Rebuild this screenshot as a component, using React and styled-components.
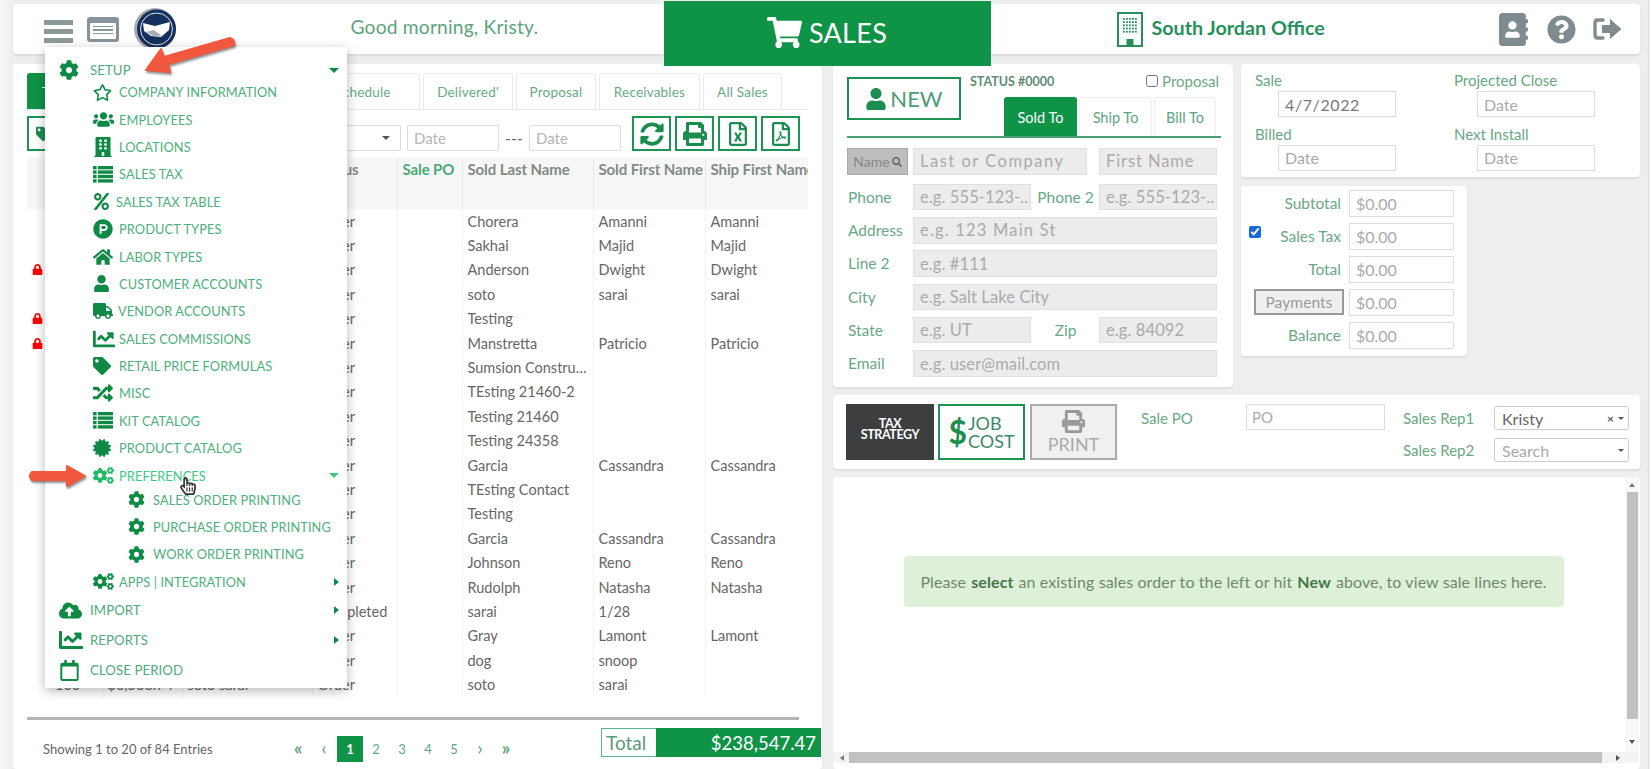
import React from 'react';
import styled, { createGlobalStyle } from 'styled-components';
import {
  FaCog, FaRegStar, FaUsers, FaBuilding, FaPercent, FaProductHunt, FaHome, FaUser, FaTruck,
  FaChartLine, FaTag, FaRandom, FaCertificate, FaCogs, FaCloudUploadAlt, FaRegCalendar, FaShoppingCart,
  FaAddressBook, FaQuestionCircle, FaSyncAlt, FaPrint, FaRegFileExcel, FaRegFilePdf, FaSearch, FaLock,
  FaRegHandPointer, FaTags,
} from 'react-icons/fa';

const GREEN = '#0f9347';
const FONT = '"Lato", "Open Sans", sans-serif';

const Global = createGlobalStyle`
  html, body { margin: 0; padding: 0; height: 100%; overflow: hidden; background: #eceef0; }
  * { box-sizing: border-box; }
  body { font-family: ${FONT}; color: #666; }
  input { font-family: ${FONT}; }
`;

const Page = styled.div`
  position: relative; width: 1651px; height: 769px; overflow: hidden;
  padding: 4px 11px 0 13px;
  background: linear-gradient(90deg, #f9f9fb 0, #eceef0 12px, #eceef0 1648px, #d9dadd 1649px, #fbfbfb 1650px);
`;

const Header = styled.header`
  display: flex; align-items: center; height: 50px; background: #fff; border-radius: 4px;
  box-shadow: 0 2px 2px rgba(0,0,0,.08); padding-left: 31px;
`;
const Burger = styled.div`
  display: flex; flex-direction: column; justify-content: space-between; width: 29px; height: 23px; margin-top: 5px;
  span { display: block; height: 5px; background: #8b9a99; }
`;
const ListCard = styled.div`
  width: 32px; height: 25px; margin-left: 14px; border-radius: 3px; background: #87959a; padding: 6px 3px 3px;
  display: flex;
  div { flex: 1; background: #fff; border-radius: 1px; padding: 3px 3px; display: flex; flex-direction: column; gap: 2px; }
  i { display: block; height: 1.5px; background: #87959a; }
`;
const LogoWrap = styled.div`width: 44px; height: 44px; margin-left: 15px;`;
const Greeting = styled.div`
  width: 313px; margin-left: 172.5px; margin-bottom: 5px; font-size: 19.2px; color: #5da37c; letter-spacing: .2px;
`;
const SalesTab = styled.div`
  width: 327px; height: 65px; align-self: flex-start; margin-top: -3px; padding-bottom: 3px;
  background: ${GREEN}; color: #fff; display: flex; align-items: center; justify-content: center;
  gap: 7px; font-size: 27px; letter-spacing: .3px; position: relative; z-index: 2;
  svg { font-size: 35px; }
`;
const Office = styled.div`
  display: flex; align-items: center; gap: 9px; margin-left: 126px; font-size: 19.7px; font-weight: 700;
  color: #27905a; width: 380px;
  span { padding-bottom: 4px; }
`;
const HeadIcons = styled.div`
  display: flex; align-items: center; gap: 17px; color: #7e8b8f;
`;

const Main = styled.main`
  display: grid; grid-template-columns: 809px 807px; column-gap: 11px; margin-top: 10px; height: 705px;
`;
const LeftPanel = styled.section`
  background: #fff; border-radius: 4px; padding: 9px 14px 0; display: flex; flex-direction: column; min-width: 0;
`;
const Tabs = styled.div`
  display: flex; gap: 3px; height: 37px; border-bottom: 1px solid #e8e8e8; align-items: stretch; flex: none;
`;
const TabItem = styled.div`
  width: ${p => p.$w}px; display: flex; align-items: center; justify-content: center;
  font-size: 13.5px; border: 1px solid ${p => (p.$active ? GREEN : '#ececec')}; border-bottom: 0;
  border-radius: 3px 3px 0 0; color: ${p => (p.$active ? '#fff' : '#66ab84')};
  background: ${p => (p.$active ? GREEN : '#fff')}; letter-spacing: .2px;
`;
const FilterRow = styled.div`
  display: flex; align-items: flex-end; height: 41px; flex: none;
`;
const OutlineBtn = styled.div`
  width: ${p => p.$w || 39}px; height: 35px; border: 2px solid #1b9553; color: #1b8d4e;
  display: flex; align-items: center; justify-content: center; font-size: 24px; flex: none;
`;
const BtnGroup = styled.div`display: flex; gap: 4px; margin-left: 11px;`;
const SmallSelect = styled.div`
  width: 150px; height: 26px; margin-left: 188px; border: 1px solid #ddd; border-radius: 2px;
  display: flex; align-items: center; justify-content: flex-end; padding-right: 10px;
`;
const CaretDown = styled.i`
  display: inline-block; border-left: ${p => p.$s || 4}px solid transparent; border-right: ${p => p.$s || 4}px solid transparent;
  border-top: ${p => p.$s || 4}px solid ${p => p.$c || '#555'};
`;
const DateInput = styled.input`
  width: 92px; height: 26px; border: 1px solid #ddd; font-size: 15px; padding: 0 6px; border-radius: 1px;
  color: #777; background: #fff;
  &::placeholder { color: #b5b5b5; opacity: 1; }
`;
const Dash = styled.span`width: 30px; text-align: center; font-size: 16px; color: #666; padding-bottom: 4px;`;
const DateGap = styled.span`width: 6px;`;

const TableWrap = styled.div`
  width: 781px; overflow: hidden; margin-top: 7px; flex: none; height: 539px;
`;
const Table = styled.table`
  table-layout: fixed; width: 797px; border-collapse: collapse; font-size: 14.5px;
`;
const Th = styled.th`
  height: 51px; background: #f7f7f7; text-align: left; vertical-align: top; padding: 2px 5px; font-size: 15px;
  font-weight: 700; color: ${p => (p.$g ? '#4caa75' : '#7f8c84')}; border-right: 1px solid #e9e9e9; white-space: nowrap; overflow: hidden;
  letter-spacing: -.1px;
`;
const Td = styled.td`
  height: 24.4px; padding: 0 5px; color: #666; white-space: nowrap; overflow: hidden; text-overflow: ellipsis;
  border-right: 1px solid #f3f3f3;
`;
const LockSlot = styled.span`
  display: inline-block; width: 23px; color: #f00; font-size: 11px;
`;
const TableRule = styled.div`flex: none; height: 3px; background: #b5b5b5; width: 772px; margin-top: 20px;`;
const FootRow = styled.div`
  display: flex; align-items: flex-start; height: 48px; width: 795px; flex: none;
`;
const Showing = styled.div`font-size: 13px; color: #666; padding-left: 16px; width: 258px; margin-top: 21px;`;
const Pager = styled.div`
  display: flex; align-items: center; font-size: 13px; color: #5ea67e; width: 316px; margin-top: 16px;
`;
const PageNum = styled.span`
  width: 26px; height: 26px; display: flex; align-items: center; justify-content: center;
  background: ${p => (p.$on ? GREEN : 'transparent')}; color: ${p => (p.$on ? '#fff' : '#5ea67e')}; font-weight: ${p => (p.$b ? 700 : 400)};
  font-size: ${p => (p.$arrow ? 19 : 13)}px; padding-bottom: ${p => (p.$arrow ? 3 : 0)}px;
`;
const TotalBox = styled.div`
  display: flex; width: 220px; height: 29px; margin-top: 8px; flex: none;
`;
const TotalLabel = styled.div`
  width: 55px; border: 1px solid #5fb287; border-right: 0; color: #5d9a7a; font-size: 19px; display: flex; align-items: center; padding-left: 4px;
`;
const TotalValue = styled.div`
  flex: 1; background: ${GREEN}; color: #fff; font-size: 18.5px; display: flex; align-items: center; justify-content: flex-end; padding-right: 5px;
`;

const RightCol = styled.section`
  display: grid; grid-template-columns: 400px 399px; column-gap: 8px; grid-template-rows: 323px 74px 1fr; row-gap: 8px; min-width: 0;
`;
const Card = styled.div`background: #fff; border-radius: 4px; box-shadow: 0 2px 2px rgba(0,0,0,.07);`;
const FormCard = styled(Card)`padding: 13px 14px 0;`;
const FormTop = styled.div`display: flex; align-items: flex-start;`;
const NewBtn = styled.div`
  width: 114px; height: 43px; border: 2px solid #1b9553; color: #4b9c72; font-size: 22px; display: flex; align-items: center; justify-content: center; gap: 3px;
  svg { color: #1b8d4e; font-size: 22px; }
`;
const StatusCol = styled.div`flex: 1; padding-left: 9px;`;
const StatusLine = styled.div`display: flex; justify-content: space-between; align-items: center; height: 12px; margin-top: -2px;`;
const StatusText = styled.span`font-size: 12.5px; font-weight: 700; color: #5f8c72;`;
const ProposalCheck = styled.label`
  display: flex; align-items: center; gap: 4px; font-size: 15px; color: #6aa983;
  input { margin: 0; width: 12px; height: 12px; }
`;
const FormTabs = styled.div`display: flex; gap: 2px; margin-top: 10px; padding-left: 34px;`;
const FormTab = styled.div`
  width: ${p => p.$w}px; height: 39px; display: flex; align-items: center; justify-content: center; font-size: 14.5px;
  border: 1px solid ${p => (p.$on ? GREEN : '#eee')}; border-bottom: 0; border-radius: 3px 3px 0 0;
  background: ${p => (p.$on ? GREEN : '#fff')}; color: ${p => (p.$on ? '#fff' : '#5ea67e')};
`;
const FormRule = styled.div`height: 2px; background: #4d9e73; margin: 0 -2px 0 0;`;
const FormGrid = styled.div`
  display: grid; grid-template-columns: 66px 118px 68px 118px; margin-top: 10px; row-gap: 6.8px; align-items: start;
`;
const FieldLabel = styled.label`
  font-size: 15.5px; color: #68a883; padding-left: 1px; line-height: 26.5px;
  ${p => p.$center && 'text-align: center;'}
`;
const FieldInput = styled.input`
  height: 26.5px; width: ${p => p.$width || '100%'}; border: 1px solid #e0e0e0; background: #ececec; font-size: 16.5px; padding: 0 2px 0 6px; min-width: 0;
  grid-column: ${p => p.$span || 'auto'}; letter-spacing: ${p => p.$track || 0.1}px;
  &::placeholder { color: #aaa; opacity: 1; }
`;
const NameBtn = styled.div`
  height: 27px; width: 61px; margin-bottom: 2px; background: #bdbdbd; border: 1px solid #aaa; color: #888; font-size: 14px; display: flex; align-items: center; justify-content: center; gap: 2px;
  svg { font-size: 10px; color: #666; }
`;
const SideStack = styled.div`display: flex; flex-direction: column; gap: 9px;`;
const DatesCard = styled(Card)`
  height: 113px; display: grid; grid-template-columns: 199px 1fr; padding: 6px 14px 0;
`;
const DateBlock = styled.div`
  display: flex; flex-direction: column; height: 53px;
  span { font-size: 15px; color: #68a883; line-height: 21px; }
`;
const DateField = styled.input`
  width: 118px; height: 26px; margin-left: 23px; border: 1px solid #ddd; font-size: 16px; padding: 0 6px; background: #fff; color: #777; letter-spacing: .6px;
  &::placeholder { color: #aaa; opacity: 1; letter-spacing: 0; }
`;
const TotalsCard = styled(Card)`
  width: 226px; height: 170px; padding-top: 4px; display: flex; flex-direction: column; gap: 6.5px; padding-left: 8px;
`;
const TotalRow = styled.div`display: flex; align-items: center; height: 26.5px;`;
const TotalLeft = styled.div`
  width: 92px; display: flex; align-items: center; justify-content: flex-end; font-size: 15.5px; color: #68a883;
  input { margin: 0 auto 8px 0; width: 12px; height: 12px; accent-color: #1668dc; }
`;
const TotalInput = styled.input`
  margin-left: 8px; width: 105px; height: 26.5px; border: 1px solid #ddd; font-size: 16px; padding: 0 6px;
  &::placeholder { color: #aaa; opacity: 1; }
`;
const PayBtn = styled.div`
  width: 90px; height: 26px; flex: none; margin-right: -3px; border: 2px solid #999; background: #efefef; color: #999; font-size: 15.5px; letter-spacing: .1px; display: flex; align-items: center; justify-content: center;
`;
const Toolbar = styled(Card)`
  grid-column: 1 / 3; display: flex; padding: 9px 0 0 13px;
`;
const TaxBtn = styled.div`
  width: 88px; height: 56px; padding-bottom: 7px; background: #3c3e40; color: #fff; font-size: 12.5px; font-weight: 700; line-height: 11px; text-align: center; display: flex; align-items: center; justify-content: center; letter-spacing: -.4px;
`;
const JobBtn = styled.div`
  width: 87px; height: 56px; margin-left: 4px; border: 2px solid #1b9553; color: #3d8c66; display: flex; align-items: center; justify-content: center; font-size: 18px; line-height: 18px;
  b { font-size: 32px; line-height: 1; font-weight: 700; color: #1b8d4e; margin-right: 1px; }
`;
const PrintBtn = styled.div`
  width: 87px; height: 56px; margin-left: 5px; border: 2px solid #aaa; background: #f0f0f0; color: #aaa; display: flex; flex-direction: column; align-items: center; justify-content: center; font-size: 18px; line-height: 22px;
  svg { font-size: 23px; color: #9a9a9a; }
`;
const SaleLabel = styled.span`margin-left: 24px; width: 105px; font-size: 15px; color: #68a883; padding-top: 5px;`;
const PoInput = styled.input`
  width: 139px; height: 26px; border: 1px solid #ddd; font-size: 15px; padding: 0 5px;
  &::placeholder { color: #aaa; opacity: 1; }
`;
const RepCol = styled.div`display: flex; flex-direction: column; margin-left: 18px; gap: 8px; margin-top: 2px;`;
const RepRow = styled.div`display: flex; align-items: center;`;
const RepLabel = styled.span`width: 91px; font-size: 15px; color: #68a883;`;
const RepSelect = styled.div`
  width: 135px; height: 24px; border: 1px solid #ccc; border-radius: 3px; display: flex; align-items: center; padding: 0 4px 0 7px; gap: 4px;
  font-size: 16px; color: ${p => (p.$ph ? '#aaa' : '#666')};
  span:first-child { flex: 1; }
`;
const Clear = styled.span`font-size: 12px; font-weight: 700; color: #555;`;
const Lines = styled.div`
  grid-column: 1 / 3; display: grid; grid-template-columns: 792px 14px; grid-template-rows: 275px 11px 5px; min-height: 0; background: #fff; border-radius: 4px;
`;
const LinesBody = styled.div`
  display: flex; align-items: flex-start; justify-content: center; padding: 79px 0 0 9px;
`;
const Alert = styled.div`
  width: 660px; height: 51px; background: #dff0d8; border-radius: 4px; display: flex; align-items: center; justify-content: center;
  font-size: 16px; color: #6e8a6e; gap: 5px; letter-spacing: .1px;
  b { color: #47764a; }
`;
const VScroll = styled.div`
  position: relative; background: #f8f8f8; padding: 15px 1px 0 2px;
`;
const VThumb = styled.div`height: 227px; background: #c1c1c1;`;
const HScroll = styled.div`
  position: relative; grid-column: 1 / 3; background: #f3f3f3; padding: 0 37px 0 16px;
`;
const HThumb = styled.div`height: 100%; background: #c1c1c1;`;
const ScrollCaret = styled.i`
  position: absolute;
  ${p => p.$dir === 'up' && 'left: 4px; top: 6px; border-left: 3px solid transparent; border-right: 3px solid transparent; border-bottom: 4px solid #777;'}
  ${p => p.$dir === 'down' && 'left: 4px; bottom: 8px; border-left: 3px solid transparent; border-right: 3px solid transparent; border-top: 4px solid #555;'}
  ${p => p.$dir === 'left' && 'left: 7px; top: 3px; border-top: 3px solid transparent; border-bottom: 3px solid transparent; border-right: 4px solid #777;'}
  ${p => p.$dir === 'right' && 'right: 19px; top: 3px; border-top: 3px solid transparent; border-bottom: 3px solid transparent; border-left: 4px solid #555;'}
`;

const Menu = styled.nav`
  position: absolute; left: 45px; top: 47px; width: 302px; height: 641px; background: #fff; z-index: 5;
  box-shadow: 0 3px 12px rgba(0,0,0,.28); padding-top: 14.5px; border-radius: 2px;
`;
const MenuRow = styled.div`
  display: flex; align-items: center; height: ${p => p.$h || 27.4}px; padding-left: ${p => [14, 48, 83][p.$level]}px; padding-right: 8px;
  font-size: ${p => (p.$level === 0 ? 13.2 : 12.8)}px; letter-spacing: .1px; white-space: nowrap;
  margin-top: ${p => (p.$tuck ? -3.5 : 0)}px;
  color: ${p => (p.$bright ? '#3ec97f' : p.$level === 0 ? '#50a97b' : '#4cb07a')};
`;
const MenuIcon = styled.span`
  flex: none; width: ${p => p.$w}px; display: flex; align-items: center; color: ${p => (p.$bright ? '#22b968' : '#0f8a44')};
`;
const MenuCaret = styled.i`
  margin-left: auto;
  ${p => (p.$right
    ? 'border-top: 4px solid transparent; border-bottom: 4px solid transparent; border-left: 5px solid #0f8a44;'
    : `border-left: 5px solid transparent; border-right: 5px solid transparent; border-top: 5px solid ${p.$bright ? '#3ec97f' : '#0f8a44'};`)}
`;
const Hand = styled.span`
  position: absolute; left: 179px; top: 477px; z-index: 7; color: #333; font-size: 18px; line-height: 0;
`;
const ArrowLayer = styled.svg`
  position: absolute; left: 0; top: 0; width: 300px; height: 520px; z-index: 6; pointer-events: none;
  filter: drop-shadow(1px 2px 1px rgba(0,0,0,.45));
`;

function BuildingIcon() {
  const dots = [];
  for (let y = 0; y < 5; y++) for (let x = 0; x < 5; x++) dots.push(<rect key={x + '-' + y} x={6 + x * 3} y={6 + y * 3.2} width="1.8" height="1.8" fill="#27905a" />);
  return (
    <svg width="26" height="35" viewBox="0 0 26 35">
      <rect x="1" y="1" width="24" height="33" fill="none" stroke="#27905a" strokeWidth="2" />
      {dots}
      <rect x="9.5" y="27" width="7" height="7" fill="#27905a" />
    </svg>
  );
}
function Logo() {
  return (
    <svg width="44" height="44" viewBox="0 0 44 44">
      <circle cx="21" cy="22" r="21" fill="#a5abb0" />
      <circle cx="22.5" cy="22" r="19.5" fill="#14305c" />
      <circle cx="22.5" cy="22" r="16" fill="none" stroke="#dfe4ea" strokeWidth="1" />
      <path d="M9 16 L21 19 L36 15 L35 23 L27 30 L17 29 L10 24 Z" fill="#fff" />
      <path d="M12 25 L20 23 L28 29 L20 29.5 Z" fill="#a7b0ba" />
    </svg>
  );
}
function SignOut() {
  return (
    <svg width="29" height="24" viewBox="0 0 29 24">
      <path d="M10 3H5C3 3 2 4 2 6V18C2 20 3 21 5 21H10" fill="none" stroke="#7e8b8f" strokeWidth="3.4" strokeLinecap="round" />
      <path d="M9 8H17V2L28.5 12L17 22V16H9Z" fill="#7e8b8f" />
    </svg>
  );
}
function DenseList({ size }) {
  return (
    <svg width={size} height={size * 0.84} viewBox="0 0 19 16" fill="currentColor">
      {[0, 4.2, 8.4, 12.6].map(y => (
        <g key={y}>
          <rect x="0" y={y} width="3.4" height="3.2" />
          <rect x="4.6" y={y} width="14.4" height="3.2" />
        </g>
      ))}
    </svg>
  );
}

const MENU = [
  { l: 'SETUP', I: FaCog, level: 0, s: 20, w: 31, h: 17, caret: 'down' },
  { l: 'COMPANY INFORMATION', I: FaRegStar, level: 1, s: 19, w: 26 },
  { l: 'EMPLOYEES', I: FaUsers, level: 1, s: 21, w: 26 },
  { l: 'LOCATIONS', I: FaBuilding, level: 1, s: 20, w: 26 },
  { l: 'SALES TAX', I: DenseList, level: 1, s: 20, w: 26 },
  { l: 'SALES TAX TABLE', I: FaPercent, level: 1, s: 17, w: 23 },
  { l: 'PRODUCT TYPES', I: FaProductHunt, level: 1, s: 20, w: 26 },
  { l: 'LABOR TYPES', I: FaHome, level: 1, s: 20, w: 26 },
  { l: 'CUSTOMER ACCOUNTS', I: FaUser, level: 1, s: 17, w: 26 },
  { l: 'VENDOR ACCOUNTS', I: FaTruck, level: 1, s: 20, w: 25 },
  { l: 'SALES COMMISSIONS', I: FaChartLine, level: 1, s: 22, w: 26 },
  { l: 'RETAIL PRICE FORMULAS', I: FaTag, level: 1, s: 18, w: 26 },
  { l: 'MISC', I: FaRandom, level: 1, s: 20, w: 26 },
  { l: 'KIT CATALOG', I: DenseList, level: 1, s: 20, w: 26 },
  { l: 'PRODUCT CATALOG', I: FaCertificate, level: 1, s: 18, w: 26 },
  { l: 'PREFERENCES', I: FaCogs, level: 1, s: 21, w: 26, caret: 'down', bright: true },
  { l: 'SALES ORDER PRINTING', I: FaCog, level: 2, s: 17, w: 25, tuck: true },
  { l: 'PURCHASE ORDER PRINTING', I: FaCog, level: 2, s: 17, w: 25 },
  { l: 'WORK ORDER PRINTING', I: FaCog, level: 2, s: 17, w: 25 },
  { l: 'APPS | INTEGRATION', I: FaCogs, level: 1, s: 21, w: 26, caret: 'right' },
  { l: 'IMPORT', I: FaCloudUploadAlt, level: 0, s: 23, w: 31, h: 30, caret: 'right' },
  { l: 'REPORTS', I: FaChartLine, level: 0, s: 24, w: 31, h: 30, caret: 'right' },
  { l: 'CLOSE PERIOD', I: FaRegCalendar, level: 0, s: 21, w: 31, h: 30 },
];

const ROWS = [
  ['Order', 'Chorera', 'Amanni', 'Amanni'],
  ['Order', 'Sakhai', 'Majid', 'Majid'],
  ['Order', 'Anderson', 'Dwight', 'Dwight', 1],
  ['Order', 'soto', 'sarai', 'sarai'],
  ['Order', 'Testing', '', '', 1],
  ['Order', 'Manstretta', 'Patricio', 'Patricio', 1],
  ['Order', 'Sumsion Construction', '', ''],
  ['Order', 'TEsting 21460-2', '', ''],
  ['Order', 'Testing 21460', '', ''],
  ['Order', 'Testing 24358', '', ''],
  ['Order', 'Garcia', 'Cassandra', 'Cassandra'],
  ['Order', 'TEsting Contact', '', ''],
  ['Order', 'Testing', '', ''],
  ['Order', 'Garcia', 'Cassandra', 'Cassandra'],
  ['Order', 'Johnson', 'Reno', 'Reno'],
  ['Order', 'Rudolph', 'Natasha', 'Natasha'],
  ['Completed', 'sarai', '1/28', ''],
  ['Order', 'Gray', 'Lamont', 'Lamont'],
  ['Order', 'dog', 'snoop', ''],
  ['Order', 'soto', 'sarai', ''],
];

const COLS = [75, 80, 130, 85, 65, 131, 112, 119];

export default function App() {
  return (
    <Page>
      <Global />
      <Header>
        <Burger><span /><span /><span /></Burger>
        <ListCard><div><i /><i /><i /></div></ListCard>
        <LogoWrap><Logo /></LogoWrap>
        <Greeting>Good morning, Kristy.</Greeting>
        <SalesTab><FaShoppingCart />SALES</SalesTab>
        <Office><BuildingIcon /><span>South Jordan Office</span></Office>
        <HeadIcons>
          <FaAddressBook size={33} />
          <FaQuestionCircle size={29} />
          <SignOut />
        </HeadIcons>
      </Header>
      <Main>
        <LeftPanel>
          <Tabs>
            <TabItem $active $w={66}>Today</TabItem>
            <TabItem $w={94} />
            <TabItem $w={110} />
            <TabItem $w={114}>Schedule</TabItem>
            <TabItem $w={90}>Delivered'</TabItem>
            <TabItem $w={80}>Proposal</TabItem>
            <TabItem $w={101}>Receivables</TabItem>
            <TabItem $w={79}>All Sales</TabItem>
          </Tabs>
          <FilterRow>
            <OutlineBtn $w={36}><FaTags size={18} /></OutlineBtn>
            <SmallSelect><CaretDown /></SmallSelect>
            <DateGap />
            <DateInput placeholder="Date" readOnly />
            <Dash>---</Dash>
            <DateInput placeholder="Date" readOnly />
            <BtnGroup>
              <OutlineBtn><FaSyncAlt /></OutlineBtn>
              <OutlineBtn><FaPrint /></OutlineBtn>
              <OutlineBtn><FaRegFileExcel /></OutlineBtn>
              <OutlineBtn><FaRegFilePdf /></OutlineBtn>
            </BtnGroup>
          </FilterRow>
          <TableWrap>
            <Table>
              <colgroup>{COLS.map((c, i) => <col key={i} width={c} />)}</colgroup>
              <thead>
                <tr>
                  <Th />
                  <Th />
                  <Th />
                  <Th>Status</Th>
                  <Th $g>Sale PO</Th>
                  <Th>Sold Last Name</Th>
                  <Th>Sold First Name</Th>
                  <Th>Ship First Name</Th>
                </tr>
              </thead>
              <tbody>
                {ROWS.map((r, i) => (
                  <tr key={i}>
                    <Td>{r[4] ? <LockSlot><FaLock /></LockSlot> : null}{i === 19 ? <LockSlot /> : null}{i === 19 ? '100' : ''}</Td>
                    <Td>{i === 19 ? '$6,538.74' : ''}</Td>
                    <Td>{i === 19 ? 'soto sarai' : ''}</Td>
                    <Td>{r[0]}</Td>
                    <Td />
                    <Td>{r[1]}</Td>
                    <Td>{r[2]}</Td>
                    <Td>{r[3]}</Td>
                  </tr>
                ))}
              </tbody>
            </Table>
          </TableWrap>
          <TableRule />
          <FootRow>
            <Showing>Showing 1 to 20 of 84 Entries</Showing>
            <Pager>
              <PageNum $b $arrow>«</PageNum>
              <PageNum $arrow>‹</PageNum>
              <PageNum $on $b>1</PageNum>
              <PageNum>2</PageNum>
              <PageNum>3</PageNum>
              <PageNum>4</PageNum>
              <PageNum>5</PageNum>
              <PageNum $arrow>›</PageNum>
              <PageNum $b $arrow>»</PageNum>
            </Pager>
            <TotalBox>
              <TotalLabel>Total</TotalLabel>
              <TotalValue>$238,547.47</TotalValue>
            </TotalBox>
          </FootRow>
        </LeftPanel>
        <RightCol>
          <FormCard>
            <FormTop>
              <NewBtn><FaUser />NEW</NewBtn>
              <StatusCol>
                <StatusLine>
                  <StatusText>STATUS #0000</StatusText>
                  <ProposalCheck><input type="checkbox" readOnly />Proposal</ProposalCheck>
                </StatusLine>
                <FormTabs>
                  <FormTab $on $w={73}>Sold To</FormTab>
                  <FormTab $w={73}>Ship To</FormTab>
                  <FormTab $w={62}>Bill To</FormTab>
                </FormTabs>
              </StatusCol>
            </FormTop>
            <FormRule />
            <FormGrid>
              <NameBtn>Name<FaSearch /></NameBtn>
              <FieldInput $span="2 / 4" $width="174px" $track={1.5} placeholder="Last or Company" readOnly />
              <FieldInput $span="4 / 5" $track={0.9} placeholder="First Name" readOnly />
              <FieldLabel>Phone</FieldLabel>
              <FieldInput placeholder="e.g. 555-123-..." readOnly />
              <FieldLabel $center>Phone 2</FieldLabel>
              <FieldInput placeholder="e.g. 555-123-..." readOnly />
              <FieldLabel>Address</FieldLabel>
              <FieldInput $span="2 / 5" $track={1.2} placeholder="e.g. 123 Main St" readOnly />
              <FieldLabel>Line 2</FieldLabel>
              <FieldInput $span="2 / 5" placeholder="e.g. #111" readOnly />
              <FieldLabel>City</FieldLabel>
              <FieldInput $span="2 / 5" placeholder="e.g. Salt Lake City" readOnly />
              <FieldLabel>State</FieldLabel>
              <FieldInput placeholder="e.g. UT" readOnly />
              <FieldLabel $center>Zip</FieldLabel>
              <FieldInput placeholder="e.g. 84092" readOnly />
              <FieldLabel>Email</FieldLabel>
              <FieldInput $span="2 / 5" placeholder="e.g. user@mail.com" readOnly />
            </FormGrid>
          </FormCard>
          <SideStack>
            <DatesCard>
              <DateBlock><span>Sale</span><DateField defaultValue="4/7/2022" readOnly /></DateBlock>
              <DateBlock><span>Projected Close</span><DateField placeholder="Date" readOnly /></DateBlock>
              <DateBlock><span>Billed</span><DateField placeholder="Date" readOnly /></DateBlock>
              <DateBlock><span>Next Install</span><DateField placeholder="Date" readOnly /></DateBlock>
            </DatesCard>
            <TotalsCard>
              <TotalRow><TotalLeft>Subtotal</TotalLeft><TotalInput placeholder="$0.00" readOnly /></TotalRow>
              <TotalRow><TotalLeft><input type="checkbox" defaultChecked />Sales Tax</TotalLeft><TotalInput placeholder="$0.00" readOnly /></TotalRow>
              <TotalRow><TotalLeft>Total</TotalLeft><TotalInput placeholder="$0.00" readOnly /></TotalRow>
              <TotalRow><TotalLeft><PayBtn>Payments</PayBtn></TotalLeft><TotalInput placeholder="$0.00" readOnly /></TotalRow>
              <TotalRow><TotalLeft>Balance</TotalLeft><TotalInput placeholder="$0.00" readOnly /></TotalRow>
            </TotalsCard>
          </SideStack>
          <Toolbar>
            <TaxBtn><span>TAX<br />STRATEGY</span></TaxBtn>
            <JobBtn><b>$</b><span>JOB<br />COST</span></JobBtn>
            <PrintBtn><FaPrint />PRINT</PrintBtn>
            <SaleLabel>Sale PO</SaleLabel>
            <PoInput placeholder="PO" readOnly />
            <RepCol>
              <RepRow>
                <RepLabel>Sales Rep1</RepLabel>
                <RepSelect><span>Kristy</span><Clear>×</Clear><CaretDown $s={3} /></RepSelect>
              </RepRow>
              <RepRow>
                <RepLabel>Sales Rep2</RepLabel>
                <RepSelect $ph><span>Search</span><CaretDown $s={3} /></RepSelect>
              </RepRow>
            </RepCol>
          </Toolbar>
          <Lines>
            <LinesBody>
              <Alert><span>Please</span><b>select</b><span>an existing sales order to the left or hit</span><b>New</b><span>above, to view sale lines here.</span></Alert>
            </LinesBody>
            <VScroll>
              <ScrollCaret $dir="up" />
              <VThumb />
              <ScrollCaret $dir="down" />
            </VScroll>
            <HScroll>
              <ScrollCaret $dir="left" />
              <HThumb />
              <ScrollCaret $dir="right" />
            </HScroll>
          </Lines>
        </RightCol>
      </Main>
      <Menu>
        {MENU.map(({ l, I, level, s, w, h, caret, bright, tuck }) => (
          <MenuRow key={l} $level={level} $h={h} $bright={bright} $tuck={tuck}>
            <MenuIcon $w={w} $bright={bright}><I size={s} /></MenuIcon>
            {l}
            {caret ? <MenuCaret $right={caret === 'right'} $bright={bright} /> : null}
          </MenuRow>
        ))}
      </Menu>
      <ArrowLayer viewBox="0 0 300 520">
        <path d="M230 38 Q235 40 234 45 L168 64 L170 72 L146 70 L161 49 L164 57 L230 38 Z" fill="#f2583e" stroke="#f2583e" strokeWidth="2" strokeLinejoin="round" />
        <path d="M32 472 L67 472 L67 466 L85 476 L67 486 L67 480 L32 480 Q28 476 32 472 Z" fill="#f2583e" stroke="#f2583e" strokeWidth="2" strokeLinejoin="round" />
      </ArrowLayer>
      <Hand><FaRegHandPointer /></Hand>
    </Page>
  );
}
